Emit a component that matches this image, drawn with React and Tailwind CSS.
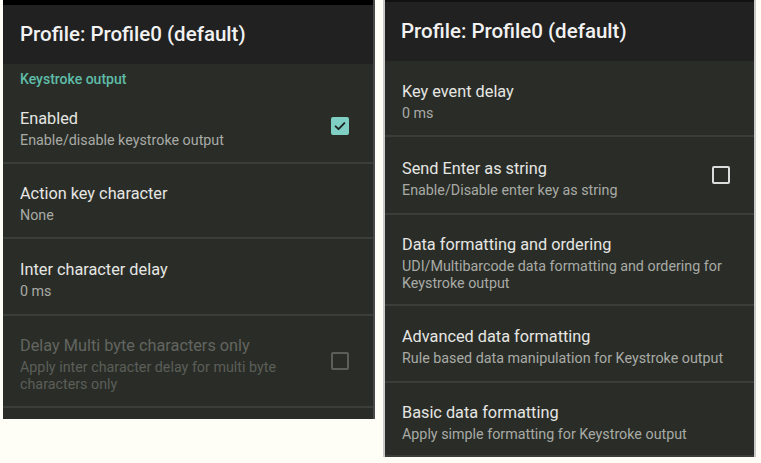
import React from "react";

const Row = ({ title, sub, check, disabled, className = "" }) => (
  <div className={`flex items-center justify-between border-b-2 border-[#3a3e38] pl-[17px] pr-[24px] ${className}`}>
    <div className="flex flex-col mt-[6px]">
      <div className={`text-[16.3px] leading-[21px] ${disabled ? "text-[#626560]" : "text-[#e6e6e4]"}`}>{title}</div>
      {sub && (
        <div className={`text-[14.3px] leading-[17px] mt-[3px] ${disabled ? "text-[#5b5e59]" : "text-[#a8aaa6]"}`}>{sub}</div>
      )}
    </div>
    {check === "on" && (
      <div className="w-[18px] h-[18px] rounded-[2px] bg-[#7fcfc4] flex items-center justify-center shrink-0">
        <svg width="14" height="14" viewBox="0 0 24 24" fill="none" stroke="#1e2420" strokeWidth="3.2" strokeLinecap="round" strokeLinejoin="round">
          <path d="M4.5 12.5l5 5L19.5 7" />
        </svg>
      </div>
    )}
    {check === "off" && (
      <div className={`w-[18px] h-[18px] rounded-[2px] border-2 shrink-0 ${disabled ? "border-[#5b5e59]" : "border-[#dcdcdc]"}`} />
    )}
  </div>
);

export default function App() {
  return (
    <div className="w-[761px] h-[463px] bg-[#fffef6] flex items-start overflow-hidden" style={{ fontFamily: "Roboto, 'Noto Sans', sans-serif" }}>
      <div className="ml-[3px] w-[372px] h-[419px] bg-[#2a2d27] border-r-2 border-[#4a4a4a] flex flex-col overflow-hidden">
        <div className="h-[64px] bg-[#212121] flex flex-col">
          <div className="h-[5px] bg-black" />
          <div className="flex-1 flex items-center pl-[17px] text-[20.5px] font-medium text-[#f2f2f2]">Profile: Profile0 (default)</div>
        </div>
        <div className="h-[31px] flex items-center pl-[17px] text-[14px] font-medium text-[#5fbca8]">Keystroke output</div>
        <Row className="h-[69px] pb-[6px]" title="Enabled" sub="Enable/disable keystroke output" check="on" />
        <Row className="h-[75px]" title="Action key character" sub="None" />
        <Row className="h-[77px]" title="Inter character delay" sub="0 ms" />
        <Row
          className="h-[92px]"
          title="Delay Multi byte characters only"
          sub={<>Apply inter character delay for multi byte<br />characters only</>}
          check="off"
          disabled
        />
      </div>
      <div className="ml-[8px] w-[373px] h-[457px] bg-[#2a2d27] border-l-2 border-r-2 border-[#c9c9c9] flex flex-col overflow-hidden">
        <div className="h-[61px] bg-[#212121] flex flex-col">
          <div className="h-[2px] bg-[#111]" />
          <div className="flex-1 flex items-center pl-[16px] text-[20.5px] font-medium text-[#f2f2f2]">Profile: Profile0 (default)</div>
        </div>
        <Row className="h-[76px] pl-[16px]" title="Key event delay" sub="0 ms" />
        <Row className="h-[78px] pl-[16px]" title="Send Enter as string" sub="Enable/Disable enter key as string" check="off" />
        <Row
          className="h-[91px] pl-[16px]"
          title="Data formatting and ordering"
          sub={<>UDI/Multibarcode data formatting and ordering for<br />Keystroke output</>}
        />
        <Row className="h-[77px] pl-[16px]" title="Advanced data formatting" sub="Rule based data manipulation for Keystroke output" />
        <Row className="h-[74px] pl-[16px] border-b-0" title="Basic data formatting" sub="Apply simple formatting for Keystroke output" />
      </div>
    </div>
  );
}
